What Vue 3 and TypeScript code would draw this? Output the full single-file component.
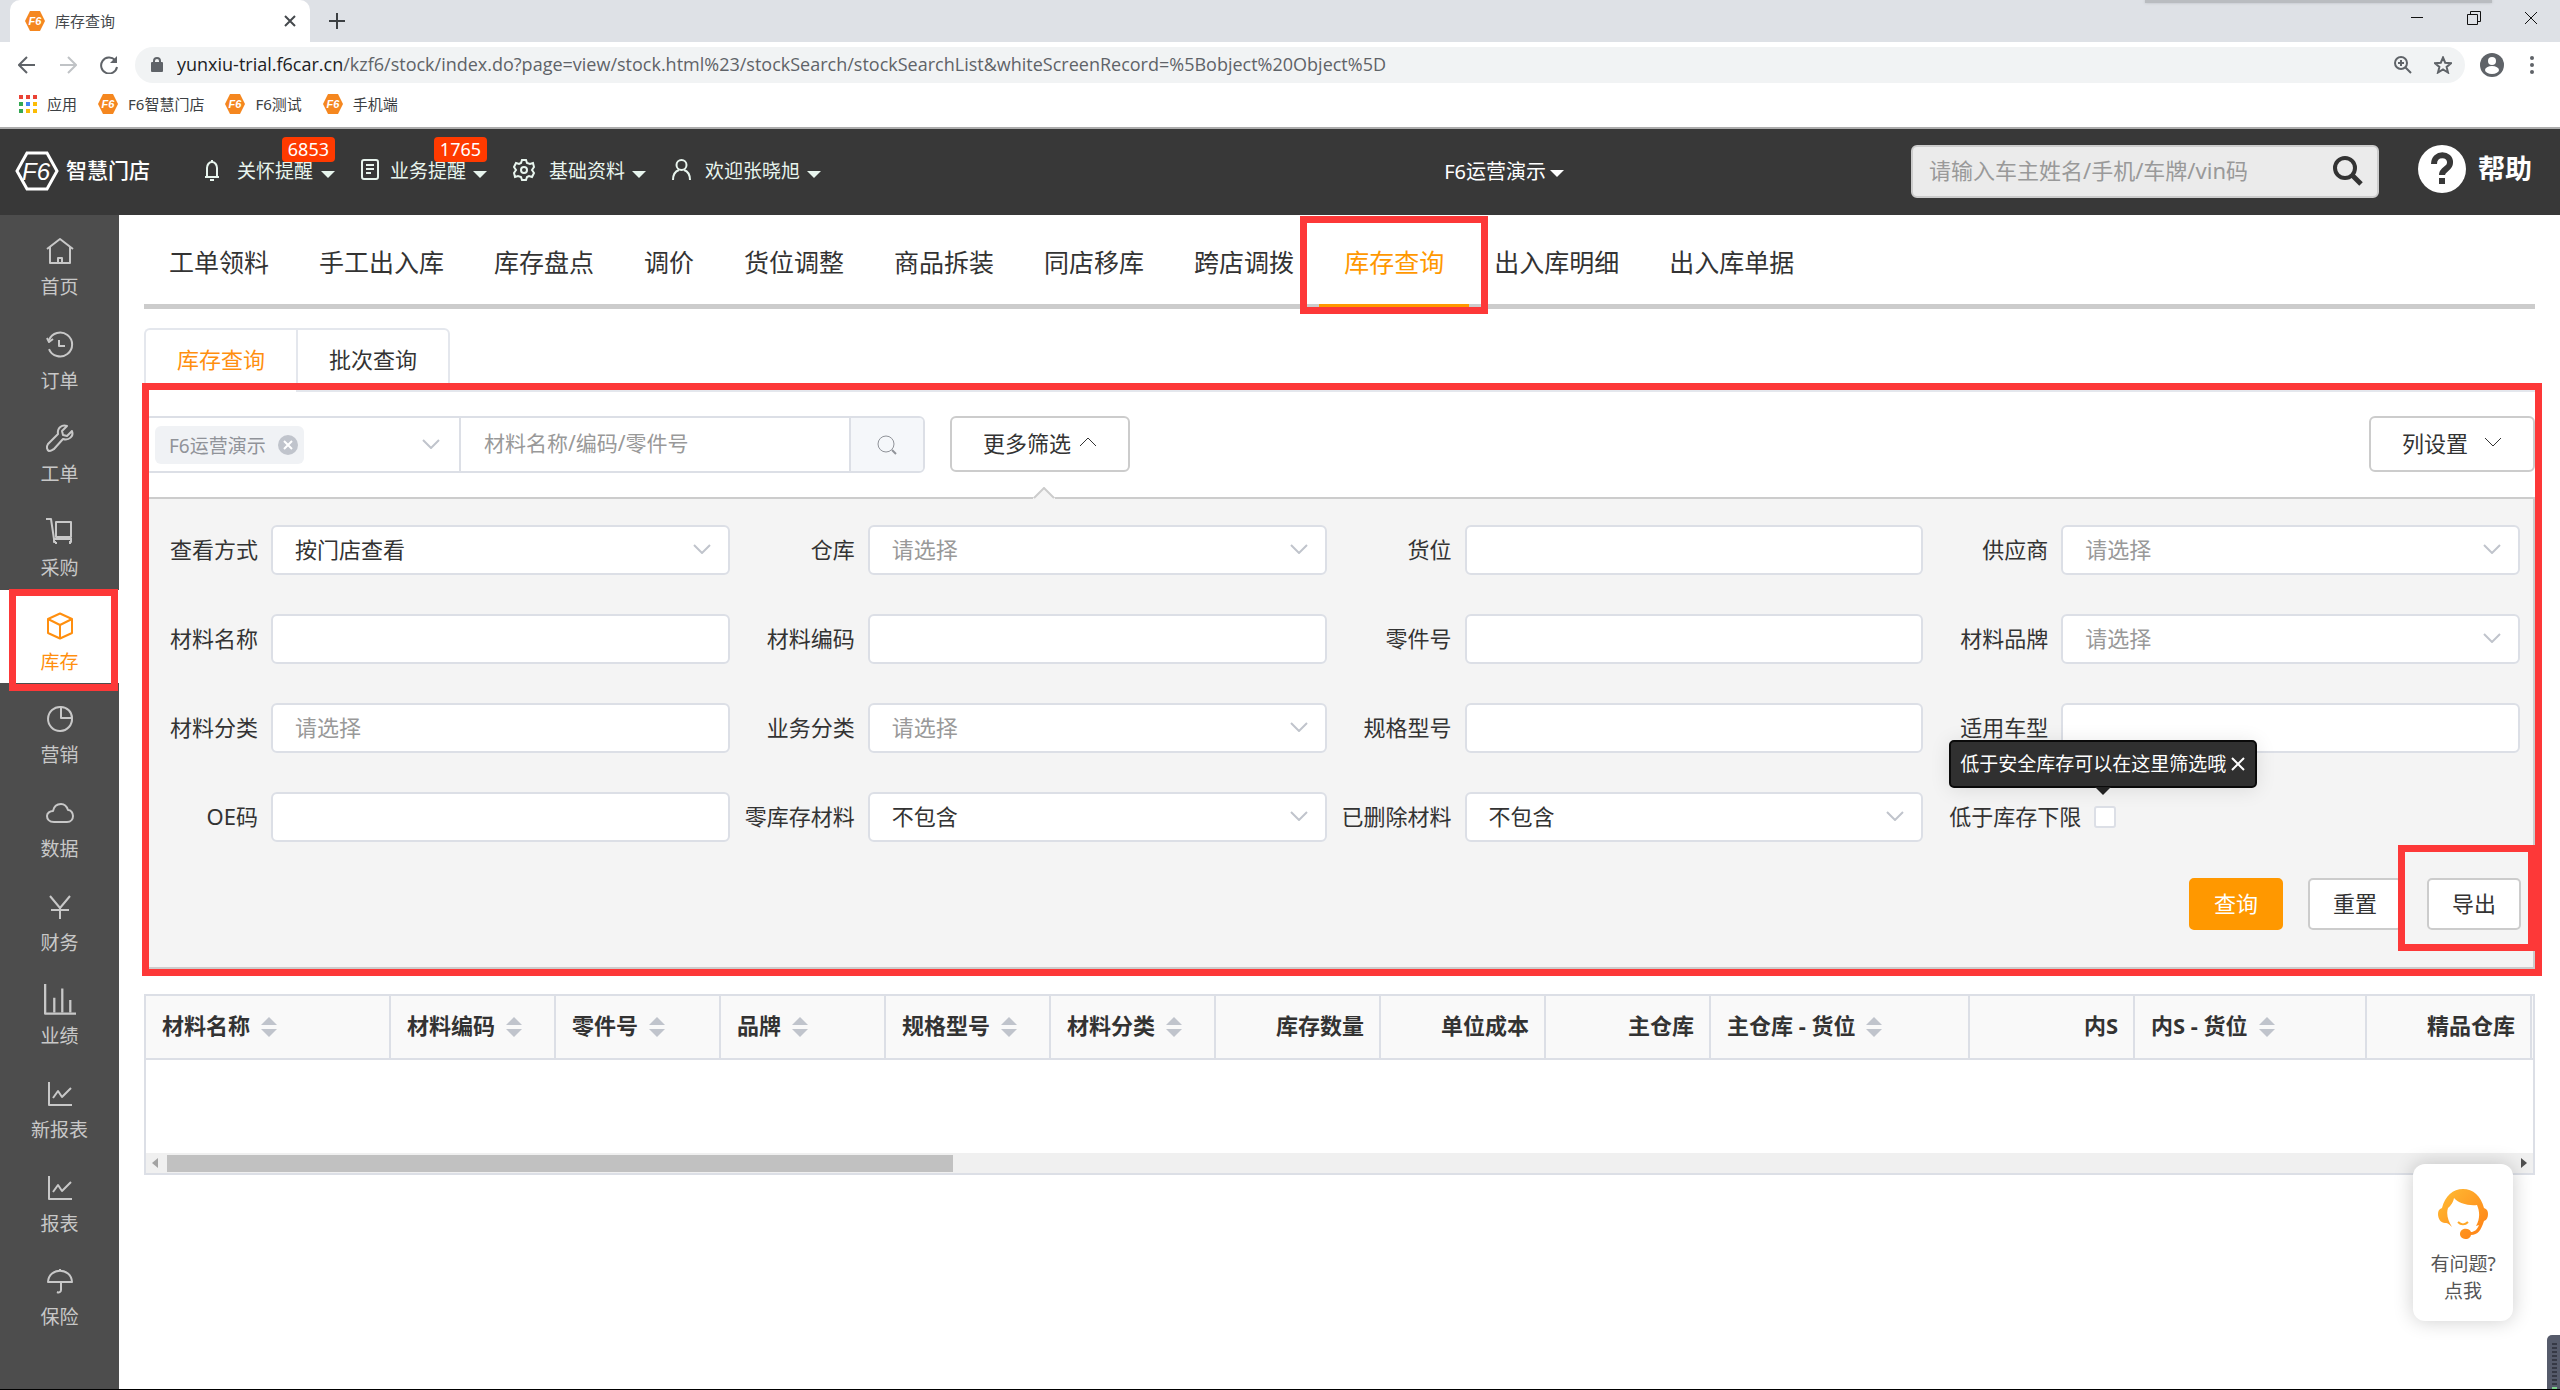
<script setup lang="ts">
import { ref } from 'vue'

interface Bookmark { label: string }
interface SideItem { label: string; paths: string[]; large?: boolean }
interface Field { id: string; label: string; kind: 'input' | 'select'; value?: string; placeholder?: string }
interface Column { label: string; width: number; sortable: boolean }

const bookmarks: Bookmark[] = [{ label: 'F6智慧门店' }, { label: 'F6测试' }, { label: '手机端' }]
const appColors = ['#ea4335', '#ea4335', '#ea4335', '#34a853', '#4285f4', '#fbbc05', '#34a853', '#fbbc05', '#fbbc05']

const sideItems: SideItem[] = [
  { label: '首页', paths: ['M1 12 14 2 27 12', 'M4 10v16h20V10', 'M12 26v-5h4v5'] },
  { label: '订单', paths: ['M3 18A12 12 0 1 0 3 9', 'M1 7 3 11 7 8', 'M13 9v6h6'] },
  { label: '工单', paths: ['M26 7 21 12 17 11 16 7 21 2C16 0 11 4 12 10L2 20C0 23 1 26 3 27 5 27 6 26 8 25L17 15C23 17 28 12 26 7Z'] },
  { label: '采购', paths: ['M0 1h5l3 20h18', 'M10 4h15v15H10Z', 'M8 21v3h2M25 21v3h-2', 'M9 25h2M23 25h2'] },
  { label: '库存', paths: ['M14 1.5 26 7v14l-12 5.5L2 21V7Z', 'M2 7l12 6 12-6', 'M14 13v13'] },
  { label: '营销', paths: ['M15 2A12 12 0 1 0 26 13', 'M15 2v11h11A11 11 0 0 0 15 2'] },
  { label: '数据', paths: ['M8 23C3 23 1 20 1 17 1 14 4 12 7 12 8 7 11 5 15 5 19 5 21 8 22 11 25 11 27 14 27 17 27 20 25 23 21 23Z'] },
  { label: '财务', paths: ['M4 3 14 15 24 3', 'M5 17h18', 'M14 15v11'] },
  { label: '业绩', large: true, paths: ['M1 0v26h27', 'M9 25V12M16 25V4M23 25V14'] },
  { label: '新报表', paths: ['M3 2v23h23', 'M7 18 12 11 16 17 25 8'] },
  { label: '报表', paths: ['M3 2v23h23', 'M7 18 12 11 16 17 25 8'] },
  { label: '保险', paths: ['M2 15C3 0 25 0 26 15Z', 'M14 2V4', 'M15 15v8c0 2-2 3-4 2'] }
]

const mainTabs: string[] = ['工单领料', '手工出入库', '库存盘点', '调价', '货位调整', '商品拆装', '同店移库', '跨店调拨', '库存查询', '出入库明细', '出入库单据']
const activeMain = ref('库存查询')
const activeSide = ref('库存')
const subTabs: string[] = ['库存查询', '批次查询']
const activeSub = ref('库存查询')

const fields: Field[] = [
  { id: 'mode', label: '查看方式', kind: 'select', value: '按门店查看' },
  { id: 'depot', label: '仓库', kind: 'select', placeholder: '请选择' },
  { id: 'slot', label: '货位', kind: 'input' },
  { id: 'supplier', label: '供应商', kind: 'select', placeholder: '请选择' },
  { id: 'name', label: '材料名称', kind: 'input' },
  { id: 'code', label: '材料编码', kind: 'input' },
  { id: 'part', label: '零件号', kind: 'input' },
  { id: 'brand', label: '材料品牌', kind: 'select', placeholder: '请选择' },
  { id: 'category', label: '材料分类', kind: 'input', placeholder: '请选择' },
  { id: 'business', label: '业务分类', kind: 'select', placeholder: '请选择' },
  { id: 'spec', label: '规格型号', kind: 'input' },
  { id: 'model', label: '适用车型', kind: 'input' },
  { id: 'oe', label: 'OE码', kind: 'input' },
  { id: 'zero', label: '零库存材料', kind: 'select', value: '不包含' },
  { id: 'deleted', label: '已删除材料', kind: 'select', value: '不包含' }
]

const columns: Column[] = [
  { label: '材料名称', width: 245, sortable: true },
  { label: '材料编码', width: 165, sortable: true },
  { label: '零件号', width: 165, sortable: true },
  { label: '品牌', width: 165, sortable: true },
  { label: '规格型号', width: 165, sortable: true },
  { label: '材料分类', width: 165, sortable: true },
  { label: '库存数量', width: 165, sortable: false },
  { label: '单位成本', width: 165, sortable: false },
  { label: '主仓库', width: 165, sortable: false },
  { label: '主仓库 - 货位', width: 259, sortable: true },
  { label: '内S', width: 165, sortable: false },
  { label: '内S - 货位', width: 232, sortable: true },
  { label: '精品仓库', width: 165, sortable: false }
]
</script>

<template>
  <div class="page">
    <header class="browser">
      <div class="tabstrip">
        <div class="tab">
          <svg class="favicon" viewBox="0 0 20 20"><path d="M5 0h10l5 10-5 10H5L0 10Z" fill="#f5871f" /><text x="10" y="14" text-anchor="middle" class="mark">F6</text></svg>
          <span class="tab-title">库存查询</span>
          <button class="plain" aria-label="关闭标签"><svg width="12" height="12" viewBox="0 0 12 12"><path d="M1 1l10 10M11 1 1 11" class="ln" stroke="#45494d" stroke-width="2" /></svg></button>
        </div>
        <button class="plain new-tab" aria-label="新标签"><svg width="16" height="16" viewBox="0 0 16 16"><path d="M8 0v16M0 8h16" class="ln" stroke="#3c4043" stroke-width="2" /></svg></button>
        <div class="window-shade"></div>
        <div class="window-controls">
          <button class="plain" aria-label="最小化"><svg width="14" height="14" viewBox="0 0 14 14"><path d="M1 6.500h12" class="ln" stroke="#111" /></svg></button>
          <button class="plain" aria-label="还原"><svg width="14" height="14" viewBox="0 0 14 14"><path d="M.5 3.500h10v10h-10zM3.500 3.500v-3h10v10h-3" class="ln" stroke="#111" /></svg></button>
          <button class="plain" aria-label="关闭"><svg width="14" height="14" viewBox="0 0 14 14"><path d="M1 1l12 12M13 1 1 13" class="ln" stroke="#111" /></svg></button>
        </div>
      </div>
      <div class="toolbar">
        <button class="plain" aria-label="后退"><svg width="18" height="18" viewBox="0 0 18 18"><path d="M17 9H2M9 1 1 9l8 8" class="ln" stroke="#5f6368" stroke-width="2" /></svg></button>
        <button class="plain" aria-label="前进"><svg width="18" height="18" viewBox="0 0 18 18"><path d="M1 9h15M9 1l8 8-8 8" class="ln" stroke="#c0c3c6" stroke-width="2" /></svg></button>
        <button class="plain" aria-label="刷新"><svg width="18" height="18" viewBox="0 0 18 18"><path d="M15 4A8 8 0 1 0 17 11" class="ln" stroke="#5f6368" stroke-width="2" /><path d="M17 0v7h-7z" fill="#5f6368" /></svg></button>
        <div class="omnibox">
          <svg width="12" height="16" viewBox="0 0 12 16"><path d="M3 6V4a3 3 0 0 1 6 0v2" class="ln" stroke="#5f6368" stroke-width="2" /><rect y="5" width="12" height="10" rx="1" fill="#5f6368" /></svg>
          <div class="url" role="textbox" aria-label="地址"><span class="host">yunxiu-trial.f6car.cn</span>/kzf6/stock/index.do?page=view/stock.html%23/stockSearch/stockSearchList&amp;whiteScreenRecord=%5Bobject%20Object%5D</div>
          <svg width="18" height="18" viewBox="0 0 18 18"><circle cx="7" cy="7" r="6" class="ln" stroke="#5f6368" stroke-width="2" /><path d="M11 11l6 6M7 4v6M4 7h6" class="ln" stroke="#5f6368" stroke-width="2" /></svg>
          <svg width="18" height="18" viewBox="0 0 18 18"><path d="M9 1.500l2.200 5.200 5.800.5-4.400 3.700 1.400 5.600L9 13.500l-5 3 1.400-5.600L1 7.200l5.800-.5Z" class="ln" stroke="#5f6368" stroke-width="2" /></svg>
        </div>
        <svg class="avatar" width="24" height="24" viewBox="0 0 24 24"><circle cx="12" cy="12" r="12" fill="#5f6368" /><circle cx="12" cy="8" r="4" fill="#fff" /><ellipse cx="12" cy="17" rx="7" ry="4" fill="#fff" /></svg>
        <svg width="4" height="18" viewBox="0 0 4 18"><circle cx="2" cy="2" r="2" fill="#5f6368" /><circle cx="2" cy="9" r="2" fill="#5f6368" /><circle cx="2" cy="16" r="2" fill="#5f6368" /></svg>
      </div>
      <nav class="bookmarks">
        <a href="#" class="bookmark">
          <svg width="18" height="18" viewBox="0 0 18 18"><rect v-for="(c, i) in appColors" :key="i" :x="(i % 3) * 7" :y="Math.floor(i / 3) * 7" width="4" height="4" :fill="c" /></svg>
          应用
        </a>
        <a v-for="b in bookmarks" :key="b.label" href="#" class="bookmark">
          <svg class="favicon" viewBox="0 0 20 20"><path d="M5 0h10l5 10-5 10H5L0 10Z" fill="#f5871f" /><text x="10" y="14" text-anchor="middle" class="mark">F6</text></svg>
          {{ b.label }}
        </a>
      </nav>
    </header>

    <header class="app-head">
      <a href="#" class="brand">
        <svg width="44" height="40" viewBox="0 0 44 40"><path d="M12 2h20l10 18-10 18H12L2 20Z" class="ln" stroke="#fff" stroke-width="3" /><text x="21" y="29" text-anchor="middle" class="mark brand-mark">F6</text></svg>
        <span>智慧门店</span>
      </a>
      <nav class="head-menu">
        <button class="head-item bell">
          <svg width="16" height="22" viewBox="0 0 16 22"><path d="M1 18h14M3 18V9a5 6 0 0 1 10 0v9M8 3V1M6 21h4" class="ln" stroke="#e8f5ee" stroke-width="2" /></svg>
          <span>关怀提醒</span><i class="caret"></i><b class="badge">6853</b>
        </button>
        <button class="head-item doc">
          <svg width="18" height="22" viewBox="0 0 18 22"><rect x="1" y="1" width="16" height="19" rx="2" class="ln" stroke="#e8f5ee" stroke-width="2" /><path d="M5 6h8M5 10h8M5 14h5" class="ln" stroke="#e8f5ee" stroke-width="2" /></svg>
          <span>业务提醒</span><i class="caret"></i><b class="badge">1765</b>
        </button>
        <button class="head-item gear">
          <svg width="22" height="22" viewBox="0 0 22 22"><path d="M9 1h4l1 3 3 1 3-1 1 4-2 3 2 3-2 4-3-1-2 1-1 3H9l-1-3-3-1-3 1-1-4 2-3-2-3 2-4 3 1 2-1Z" class="ln" stroke="#e8f5ee" stroke-width="2" /><circle cx="11" cy="11" r="3" class="ln" stroke="#e8f5ee" stroke-width="2" /></svg>
          <span>基础资料</span><i class="caret"></i>
        </button>
        <button class="head-item user">
          <svg width="19" height="22" viewBox="0 0 19 22"><circle cx="9.500" cy="6" r="5" class="ln" stroke="#e8f5ee" stroke-width="2" /><path d="M1 21c0-6 3-9 6-10M18 21c0-6-3-9-6-10" class="ln" stroke="#e8f5ee" stroke-width="2" /></svg>
          <span>欢迎张晓旭</span><i class="caret"></i>
        </button>
      </nav>
      <button class="shop">F6运营演示<i class="caret"></i></button>
      <form class="head-search" @submit.prevent>
        <input type="text" aria-label="搜索" placeholder="请输入车主姓名/手机/车牌/vin码" />
        <button class="plain" aria-label="搜索"><svg width="30" height="30" viewBox="0 0 30 30"><circle cx="12" cy="12" r="10" class="ln" stroke="#333" stroke-width="4" /><path d="M19 19l9 9" class="ln" stroke="#333" stroke-width="5" /></svg></button>
      </form>
      <a href="#" class="help">
        <svg width="48" height="48" viewBox="0 0 48 48"><circle cx="24" cy="24" r="24" fill="#fff" /><path d="M16 19c0-12 17-11 16-1 0 6-8 6-8 12" class="ln" stroke="#383838" stroke-width="6" /><rect x="21" y="33" width="6" height="6" fill="#383838" /></svg>
        <span>帮助</span>
      </a>
    </header>

    <div class="body">
      <nav class="side">
        <a v-for="s in sideItems" :key="s.label" href="#" class="side-item" :class="{ active: s.label === activeSide }" @click.prevent="activeSide = s.label">
          <svg :class="{ large: s.large }" viewBox="0 0 28 28"><path v-for="p in s.paths" :key="p" :d="p" class="ln" stroke="currentColor" stroke-width="2" stroke-linejoin="round" /></svg>
          <span>{{ s.label }}</span>
        </a>
      </nav>

      <main class="content">
        <nav class="main-tabs">
          <a v-for="t in mainTabs" :key="t" href="#" :class="{ active: t === activeMain }" @click.prevent="activeMain = t">{{ t }}</a>
        </nav>

        <div class="sub-tabs">
          <button v-for="t in subTabs" :key="t" :class="{ active: t === activeSub }" @click="activeSub = t">{{ t }}</button>
        </div>

        <section class="query">
          <div class="query-bar">
            <div class="group">
              <div class="shop-select">
                <select aria-label="门店"><option></option></select>
                <span class="tag">F6运营演示<svg width="20" height="20" viewBox="0 0 20 20"><circle cx="10" cy="10" r="10" fill="#c0c4cc" /><path d="M6 6l8 8M14 6l-8 8" class="ln" stroke="#fff" stroke-width="2" /></svg></span>
                <svg class="chev" viewBox="0 0 18 10"><path d="M1 1l8 8 8-8" class="ln" stroke="#c0c4cc" stroke-width="2" /></svg>
              </div>
              <input type="text" aria-label="材料" placeholder="材料名称/编码/零件号" />
              <button class="find" aria-label="查找"><svg width="20" height="20" viewBox="0 0 20 20"><circle cx="9" cy="9" r="8" class="ln" stroke="#909399" stroke-width="1" /><path d="M15 15l4 4" class="ln" stroke="#909399" stroke-width="2" /></svg></button>
            </div>
            <button class="btn more">更多筛选<svg width="18" height="10" viewBox="0 0 18 10"><path d="M1 9l8-8 8 8" class="ln" stroke="#333" /></svg></button>
            <button class="btn columns">列设置<svg width="18" height="10" viewBox="0 0 18 10"><path d="M1 1l8 8 8-8" class="ln" stroke="#333" /></svg></button>
          </div>

          <form class="panel" @submit.prevent>
            <svg class="pointer" width="22" height="13" viewBox="0 0 22 13"><path d="M0 11 11 1l11 10v2H0Z" fill="#f4f4f4" /><path d="M1 11 11 1l10 10" class="ln" stroke="#ccc" stroke-width="2" /></svg>
            <div class="fields">
              <div v-for="f in fields" :key="f.id" class="field">
                <label :for="f.id">{{ f.label }}</label>
                <div class="control">
                  <template v-if="f.kind === 'select'">
                    <select :id="f.id" :class="{ blank: !f.value }"><option>{{ f.value ?? f.placeholder }}</option></select>
                    <svg class="chev" viewBox="0 0 18 10"><path d="M1 1l8 8 8-8" class="ln" stroke="#c0c4cc" stroke-width="2" /></svg>
                  </template>
                  <input v-else :id="f.id" type="text" :placeholder="f.placeholder" />
                </div>
              </div>
              <div class="field check">
                <label for="low">低于库存下限</label>
                <div class="tick">
                  <input id="low" type="checkbox" />
                </div>
                <div class="tip" role="tooltip"><span>低于安全库存可以在这里筛选哦</span><button type="button" class="plain" aria-label="关闭提示"><svg width="14" height="14" viewBox="0 0 14 14"><path d="M1 1l12 12M13 1 1 13" class="ln" stroke="#fff" stroke-width="2" /></svg></button></div>
              </div>
            </div>
            <div class="actions">
              <button class="act primary">查询</button>
              <button class="act" type="reset">重置</button>
              <span class="export"><button class="act" type="button">导出</button></span>
            </div>
          </form>
        </section>

        <section class="grid">
          <table>
            <colgroup><col v-for="c in columns" :key="c.label" :style="{ width: c.width + 'px' }" /><col /></colgroup>
            <thead>
              <tr>
                <th v-for="c in columns" :key="c.label" :class="{ num: !c.sortable }">
                  {{ c.label }}<svg v-if="c.sortable" width="16" height="20" viewBox="0 0 16 20"><path d="M8 0l8 8H0zM8 20l8-8H0z" fill="#c0c4cc" /></svg>
                </th>
                <th class="gutter"></th>
              </tr>
            </thead>
          </table>
          <div class="empty"></div>
          <div class="scrollbar">
            <svg width="6" height="10" viewBox="0 0 6 10"><path d="M6 0v10L0 5z" fill="#a3a3a3" /></svg>
            <div class="rail"><div class="thumb"></div></div>
            <svg width="6" height="10" viewBox="0 0 6 10"><path d="M0 0v10l6-5z" fill="#505050" /></svg>
          </div>
        </section>
      </main>
    </div>

    <button class="service">
      <svg width="50" height="50" viewBox="0 0 50 50">
        <defs><linearGradient id="warm" x1="0" y1="0" x2="1" y2="1"><stop offset="0" stop-color="#ffbe35" /><stop offset="1" stop-color="#ff7d14" /></linearGradient></defs>
        <path fill="url(#warm)" fill-rule="evenodd" d="M4 19C7 7 15 0 25 0s18 7 21 19c3 1 4 3 4 6s-1 6-4 7C43 41 40 46 33 46c-1 6-11 5-11-1 0-6 9-7 11-2 3 0 6-2 8-7l-3 1c4-7 4-14 1-21C30 17 20 14 16 9c-1 5-3 7-6 10-2 6 0 13 4 19C10 34 9 34 7 34c-4 0-7-4-7-9 0-3 1-5 4-6Z" />
        <path d="M20 33c3 3 7 3 10 0" class="ln" stroke="#ffa726" stroke-width="2" />
      </svg>
      <span>有问题?<br />点我</span>
    </button>
    <div class="meter"><i v-for="n in 14" :key="n" :class="{ on: n > 11 }"></i></div>
  </div>
</template>

<style>
body { margin: 0; background: #fff; }
</style>

<style scoped>
* { box-sizing: border-box; }
.page {
  position: relative;
  display: flex;
  flex-direction: column;
  min-height: 100vh;
  border-bottom: 1px solid #000;
  overflow: hidden;
  color: #333;
  font-family: "Noto Sans", "Noto Sans CJK SC", sans-serif;
  font-size: 22px;
}
a { color: inherit; text-decoration: none; }
button, input, select { font: inherit; color: inherit; margin: 0; }
button { white-space: nowrap; cursor: pointer; }
svg { flex: none; display: block; }
.ln { fill: none; }
.plain { border: 0; padding: 0; background: none; }
.mark { font: italic 700 11px "Liberation Sans", sans-serif; fill: #fff; }
.brand-mark { font-size: 24px; font-weight: 400; }

/* browser chrome */
.browser { border-bottom: 2px solid #acacac; font-size: 15px; }
.tabstrip { position: relative; display: flex; align-items: center; height: 42px; padding-left: 10px; background: #dee1e6; }
.tab { display: flex; align-items: center; width: 300px; height: 42px; padding: 0 14px 0 15px; border-radius: 10px 10px 0 0; background: #fff; color: #45494d; }
.favicon { width: 20px; height: 20px; }
.tab-title { flex: 1; padding: 0 0 2px 10px; }
.new-tab { margin-left: 19px; }
.window-shade { position: absolute; top: 0; right: 68px; width: 347px; height: 3px; background: #b9bcc0; box-shadow: 0 0 3px #b9bcc0; }
.window-controls { display: flex; gap: 43px; margin-left: auto; padding: 0 22px 6px 0; }
.toolbar { display: flex; align-items: center; height: 46px; padding: 0 26px 0 18px; }
.toolbar > .plain { width: 18px; margin-right: 23px; }
.toolbar > .plain:nth-child(3) { margin-right: 17px; }
.omnibox { display: flex; align-items: center; flex: 1; min-width: 0; height: 36px; gap: 22px; padding: 0 13px 0 16px; border-radius: 18px; background: #f1f3f4; }
.url { flex: 1; min-width: 0; margin-left: -8px; padding-bottom: 2px; overflow: hidden; white-space: nowrap; color: #5f6368; font: 18px/26px "Open Sans", "Noto Sans", sans-serif; }
.host { color: #202124; }
.avatar { margin: 0 26px 0 15px; }
.bookmarks { display: flex; align-items: center; gap: 21px; height: 39px; padding: 0 19px 8px; color: #3c4043; }
.bookmark { display: flex; align-items: center; gap: 10px; }

/* application header */
.app-head { display: flex; align-items: center; height: 86px; padding: 0 28px 2px 15px; background: #383838; color: #fff; }
.brand { display: flex; align-items: center; gap: 7px; width: 189px; font-size: 21px; font-weight: 500; white-space: nowrap; }
.brand span { padding-bottom: 4px; }
.head-menu { display: flex; height: 84px; font-size: 19px; gap: 26px; }
.head-item { position: relative; display: flex; align-items: center; border: 0; padding: 0; background: none; color: #e8f5ee; line-height: 28px; }
.head-item span { margin: 0 7px 0 11px; }
.head-item svg { margin-bottom: 2px; }
.head-item.bell span { margin: 0 8px 0 17px; }
.head-item.gear span { margin-left: 14px; }
.head-item.user span { margin-left: 14px; }
.caret { display: inline-block; border: 7px solid transparent; border-top-color: currentColor; border-bottom: 0; margin-top: 6px; }
.badge { position: absolute; top: 8px; right: 0; height: 25px; padding: 0 6px; border-radius: 4px; background: #ff3a00; color: #fff; font-size: 18px; font-weight: 400; line-height: 24px; }
.shop { display: flex; align-items: center; gap: 4px; margin: 0 347px 0 auto; border: 0; padding: 0 0 2px; background: none; font-size: 20px; }
.head-search { display: flex; align-items: center; width: 468px; height: 53px; padding: 0 14px 0 16px; border: 2px solid #ccc; border-radius: 6px; background: #ebebeb; color: #333; }
.head-search input { flex: 1; min-width: 0; border: 0; padding: 0 0 3px; background: none; outline: 0; font-size: 22px; }
input::placeholder { color: #999; opacity: 1; }
.help { display: flex; align-items: center; gap: 12px; margin-left: 39px; padding-bottom: 4px; font-size: 27px; font-weight: 700; white-space: nowrap; }
.help span { padding-bottom: 4px; }

/* side navigation */
.body { display: flex; flex: 1; }
.side { display: flex; flex-direction: column; flex: none; width: 119px; padding-bottom: 50px; background: #4d4d4d; color: #c8c8c8; }
.side-item { position: relative; display: flex; flex: 1; flex-direction: column; align-items: center; min-height: 90px; padding-top: 22px; gap: 8px; font-size: 19px; line-height: 28px; }
.side-item svg { width: 28px; height: 28px; overflow: visible; }
.side-item svg.large { width: 32px; height: 32px; margin: -2px 0; }
.side-item.active { background: #fff; color: #ff8f0f; }
.side-item.active::after { content: ""; position: absolute; inset: -1px 1px -8px 9px; border: 7px solid #fd3838; z-index: 1; }

/* main column */
.content { flex: 1; min-width: 0; padding: 0 25px; }
.main-tabs { display: flex; height: 94px; border-bottom: 5px solid #ccc; font-size: 25px; line-height: 94px; white-space: nowrap; }
.main-tabs a { position: relative; height: 94px; padding: 0 25px; }
.main-tabs a.active { border-bottom: 5px solid #ff9800; color: #ff9800; }
.main-tabs a.active::after { content: ""; position: absolute; inset: 1px -19px -10px -19px; border: 7px solid #fd3838; z-index: 1; }
.sub-tabs { display: flex; margin-top: 19px; height: 64px; border-bottom: 2px solid #e4e7ed; }
.sub-tabs button { height: 64px; padding: 0 31px 4px; border: 2px solid #e4e7ed; background: #fff; }
.sub-tabs button:first-child { border-radius: 6px 0 0 0; border-right: 0; }
.sub-tabs button:last-child { border-radius: 0 6px 0 0; }
.sub-tabs button.active { border-bottom-color: #fff; color: #ff8f0f; }

/* query area */
.query { position: relative; }
.query::after { content: ""; position: absolute; inset: -9px -7px -7px -2px; border: 7px solid #fd3838; pointer-events: none; }
.query-bar { display: flex; align-items: center; height: 105px; }
.group { display: flex; width: 781px; height: 57px; border: 2px solid #dcdfe6; border-radius: 6px; overflow: hidden; }
.shop-select { position: relative; width: 315px; border-right: 2px solid #dcdfe6; }
.shop-select select { width: 100%; height: 100%; border: 0; background: none; appearance: none; }
.tag { position: absolute; left: 9px; top: 8px; display: flex; align-items: center; gap: 12px; height: 38px; padding: 0 6px 0 14px; border-radius: 6px; background: #f0f2f5; color: #909399; font-size: 19px; }
.chev { position: absolute; right: 19px; top: 50%; width: 18px; height: 10px; margin-top: -6px; pointer-events: none; }
.group input { flex: 1; min-width: 0; border: 0; padding: 0 23px 3px; outline: 0; font-size: 21px; }
.find { display: flex; align-items: center; justify-content: center; width: 74px; border: 0; border-left: 2px solid #dcdfe6; background: #f5f7fa; }
.btn { display: flex; align-items: center; height: 56px; margin-bottom: 1px; padding: 0 31px 4px; border: 2px solid #ccc; border-radius: 6px; background: #fff; }
.more { gap: 8px; margin-left: 25px; }
.columns { gap: 16px; margin-left: auto; }
.panel { position: relative; border: 2px solid #ccc; background: #f4f4f4; padding: 26px 0 37px; }
.pointer { position: absolute; left: 887px; top: -12px; }
.fields { display: grid; grid-template-columns: repeat(4, 1fr); row-gap: 39px; }
.field { position: relative; display: flex; align-items: center; height: 50px; padding-right: 13px; }
.field label { flex: none; width: 135px; margin-left: -10px; padding: 0 13px 4px 0; text-align: right; white-space: nowrap; }
.control { position: relative; flex: 1; min-width: 0; height: 50px; }
.control input, .control select { width: 100%; height: 50px; padding: 0 22px 3px; border: 2px solid #dcdfe6; border-radius: 6px; background: #fff; outline: 0; appearance: none; }
.control select.blank { color: #999; }
.check { padding-left: 13px; }
.check label { width: auto; margin: 0; }
.tick input { display: block; width: 22px; height: 22px; border: 2px solid #dcdfe6; border-radius: 3px; background: #fff; appearance: none; }
.tip { position: absolute; left: 13px; bottom: 54px; display: flex; align-items: center; gap: 5px; height: 48px; padding: 0 10px 0 9px; border: 2px solid #0a0a0a; border-radius: 5px; background: #303030; color: #fff; font-size: 19px; white-space: nowrap; box-shadow: 0 2px 20px rgba(0, 0, 0, .1); }
.tip span { padding-bottom: 2px; }
.tip::after { content: ""; position: absolute; left: 144px; top: 45px; border: 8px solid transparent; border-top-color: #222; border-bottom: 0; }
.actions { display: flex; justify-content: flex-end; gap: 25px; margin-top: 36px; padding-right: 12px; }
.act { height: 52px; width: 94px; padding: 0 0 4px; border: 2px solid #ccc; border-radius: 5px; background: #fff; }
.act.primary { border-color: #ff9800; background: #ff9800; color: #fff; }
.export { position: relative; }
.export::after { content: ""; position: absolute; inset: -33px -14px -21px -29px; border: 7px solid #fd3838; pointer-events: none; }

/* result table */
.grid { margin-top: 25px; border: 2px solid #dcdfe6; overflow: hidden; }
table { width: 100%; table-layout: fixed; border-collapse: separate; border-spacing: 0; }
th { height: 64px; padding: 0 15px 6px 16px; border-right: 2px solid #dcdfe6; border-bottom: 2px solid #dcdfe6; background: #f9f9f9; text-align: left; font-weight: 700; white-space: nowrap; }
th.num { text-align: right; }
th.gutter { padding: 0; border-right: 0; }
th svg { display: inline-block; margin-left: 11px; vertical-align: -3px; }
.empty { height: 93px; }
.scrollbar { display: flex; align-items: center; height: 20px; padding: 0 6px; background: #f0f0f0; }
.rail { flex: 1; padding: 0 9px; }
.thumb { width: 33.500%; height: 17px; background: #c1c1c1; }

/* floating helpers */
.service { position: absolute; right: 47px; top: 1164px; display: flex; flex-direction: column; align-items: center; width: 100px; height: 157px; padding: 25px 0 0; border: 0; border-radius: 12px; background: #fff; box-shadow: 0 0 20px rgba(0, 0, 0, .2); color: #555; font-size: 19px; line-height: 27px; gap: 12px; }
.meter { position: absolute; right: 0; bottom: 0; display: flex; flex-direction: column; gap: 2px; width: 13px; height: 54px; padding: 8px 3px 0 5px; border-radius: 5px 0 0 0; background: #565b6b; overflow: hidden; }
.meter i { flex: none; height: 2px; background: #363945; }
.meter i.on { background: #7ccf8a; }
</style>
